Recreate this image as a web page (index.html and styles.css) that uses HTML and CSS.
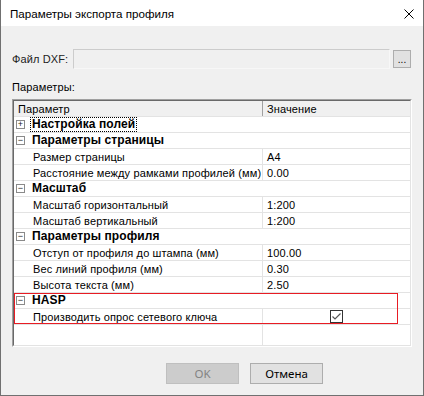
FILE: index.html
```html
<!DOCTYPE html>
<html lang="ru">
<head>
  <meta charset="UTF-8">
  <title>Параметры экспорта профиля</title>
  <link rel="stylesheet" href="styles.css">
</head>
<body>
  <div class="window">
    <div class="titlebar">
      <span class="title">Параметры экспорта профиля</span>
      <svg class="close" width="10" height="10" viewBox="0 0 10 10">
        <path d="M0.5 0.5 L9.5 9.5 M9.5 0.5 L0.5 9.5" stroke="#000" stroke-width="1" fill="none"/>
      </svg>
    </div>

    <div class="content">
      <div class="file-row">
        <span class="file-label">Файл DXF:</span>
        <div class="file-input"></div>
        <div class="browse">...</div>
      </div>

      <div class="params-label">Параметры:</div>

      <div class="grid">
        <div class="grid-inner">
          <div class="row header">
            <div class="name">Параметр</div>
            <div class="value">Значение</div>
          </div>

          <div class="row cat">
            <span class="toggle">+</span>
            <span class="cat-title focused">Настройка полей</span>
          </div>

          <div class="row cat">
            <span class="toggle">−</span>
            <span class="cat-title">Параметры страницы</span>
          </div>
          <div class="row prop">
            <div class="name">Размер страницы</div>
            <div class="value">A4</div>
          </div>
          <div class="row prop">
            <div class="name">Расстояние между рамками профилей (мм)</div>
            <div class="value">0.00</div>
          </div>

          <div class="row cat">
            <span class="toggle">−</span>
            <span class="cat-title">Масштаб</span>
          </div>
          <div class="row prop">
            <div class="name">Масштаб горизонтальный</div>
            <div class="value">1:200</div>
          </div>
          <div class="row prop">
            <div class="name">Масштаб вертикальный</div>
            <div class="value">1:200</div>
          </div>

          <div class="row cat">
            <span class="toggle">−</span>
            <span class="cat-title">Параметры профиля</span>
          </div>
          <div class="row prop">
            <div class="name">Отступ от профиля до штампа (мм)</div>
            <div class="value">100.00</div>
          </div>
          <div class="row prop">
            <div class="name">Вес линий профиля (мм)</div>
            <div class="value">0.30</div>
          </div>
          <div class="row prop">
            <div class="name">Высота текста (мм)</div>
            <div class="value">2.50</div>
          </div>

          <div class="group marked">
            <div class="row cat">
              <span class="toggle">−</span>
              <span class="cat-title">HASP</span>
            </div>
            <div class="row prop">
              <div class="name">Производить опрос сетевого ключа</div>
              <div class="value center">
                <span class="checkbox">
                  <svg width="11" height="11" viewBox="0 0 11 11">
                    <path d="M1.5 5.5 L4 8 L9.5 2.5" stroke="#555" stroke-width="1.2" fill="none"/>
                  </svg>
                </span>
              </div>
            </div>
          </div>

          <div class="filler">
            <div class="name"></div>
          </div>
        </div>
      </div>

      <div class="buttons">
        <div class="btn disabled">OK</div>
        <div class="btn">Отмена</div>
      </div>
    </div>
  </div>
</body>
</html>
```

FILE: styles.css
```css
body {
  margin: 0;
  font-family: 'Liberation Sans', Arial, sans-serif;
  font-size: 11px;
  letter-spacing: 0.12px;
  color: #000;
  background: #f0f0f0;
}

.window {
  width: 424px;
  height: 396px;
  box-sizing: border-box;
  border: 1px solid #707070;
  border-top: none;
  background: #f0f0f0;
  display: flex;
  flex-direction: column;
}

.titlebar {
  height: 26px;
  flex: none;
  background: #fff;
  display: flex;
  align-items: center;
  justify-content: space-between;
  padding: 0 9px 0 9px;
}

.title {
  font-size: 11.6px;
  letter-spacing: 0;
  margin-top: 1px;
}

.close {
  margin-top: 2px;
}

.content {
  flex: 1;
  display: flex;
  flex-direction: column;
  padding: 23px 11px 0 11px;
}

.file-row {
  display: flex;
  align-items: center;
  height: 20px;
}

.file-label {
  width: 61px;
  flex: none;
  color: #222;
}

.file-input {
  width: 317px;
  height: 20px;
  box-sizing: border-box;
  border: 1px solid #cccccc;
  border-right-color: #f7f7f7;
  border-bottom-color: #f7f7f7;
  background: #f0f0f0;
}

.browse {
  width: 18px;
  height: 18px;
  box-sizing: border-box;
  margin-left: 3px;
  border: 1px solid #adadad;
  background: #e1e1e1;
  font-size: 10px;
  letter-spacing: 0;
  text-align: center;
  line-height: 18px;
}

.params-label {
  margin-top: 12px;
  height: 13px;
  line-height: 13px;
}

.grid {
  margin-top: 5px;
  width: 400px;
  height: 248px;
  box-sizing: border-box;
  border: 1px solid;
  border-color: #a0a0a0 #fff #fff #a0a0a0;
}

.grid-inner {
  height: 100%;
  box-sizing: border-box;
  border: 1px solid;
  border-color: #696969 #e3e3e3 #e3e3e3 #696969;
  background: #fff;
  display: flex;
  flex-direction: column;
}

.row {
  height: 16px;
  flex: none;
  box-sizing: border-box;
  border-bottom: 1px solid #e3e3e3;
  display: flex;
  align-items: center;
}

.row .name {
  width: 249px;
  flex: none;
  height: 100%;
  box-sizing: border-box;
  border-right: 1px solid #e3e3e3;
  display: flex;
  align-items: center;
  white-space: nowrap;
  padding-top: 1px;
}

.row .value {
  flex: 1;
  padding-left: 4px;
  padding-top: 1px;
  height: 100%;
  box-sizing: border-box;
  display: flex;
  align-items: center;
}

.header {
  background: #f0f0f0;
}

.header .name {
  padding-left: 4px;
  border-right-color: #a0a0a0;
}

.prop .name {
  padding-left: 19px;
}

.value.center {
  padding-left: 0;
  padding-top: 0;
  justify-content: center;
}

.cat {
  font-weight: bold;
  font-size: 12px;
  letter-spacing: 0.1px;
}

.toggle {
  width: 9px;
  height: 9px;
  box-sizing: border-box;
  margin-left: 2px;
  border: 1px solid #8a8a8a;
  font-weight: normal;
  font-size: 9px;
  letter-spacing: 0;
  line-height: 7px;
  text-align: center;
  color: #222;
}

.cat-title {
  margin-left: 6px;
  padding: 0 1px;
  line-height: 13px;
  outline: 1px solid transparent;
}

.cat-title.focused {
  outline: 1px dotted #000;
}

.group {
  position: relative;
}

.group.marked::after {
  content: '';
  position: absolute;
  left: 0;
  top: 0;
  width: 384px;
  height: 31px;
  box-sizing: border-box;
  border: 1px solid #e81c24;
  pointer-events: none;
}

.checkbox {
  width: 13px;
  height: 13px;
  box-sizing: border-box;
  border: 1px solid #333;
  background: #fff;
  display: flex;
  align-items: center;
  justify-content: center;
  margin-left: -1px;
}

.filler {
  flex: 1;
  display: flex;
}

.filler .name {
  width: 249px;
  box-sizing: border-box;
  border-right: 1px solid #e3e3e3;
}

.buttons {
  display: flex;
  gap: 11px;
  margin-top: 16px;
  padding-left: 154px;
}

.btn {
  width: 73px;
  height: 21px;
  box-sizing: border-box;
  border: 1px solid #adadad;
  background: #e1e1e1;
  display: flex;
  align-items: center;
  justify-content: center;
  font-family: 'Noto Sans', sans-serif;
  font-size: 11.5px;
  letter-spacing: 0;
}

.btn.disabled {
  background: #cccccc;
  border-color: #bfbfbf;
  color: #838383;
}
```
